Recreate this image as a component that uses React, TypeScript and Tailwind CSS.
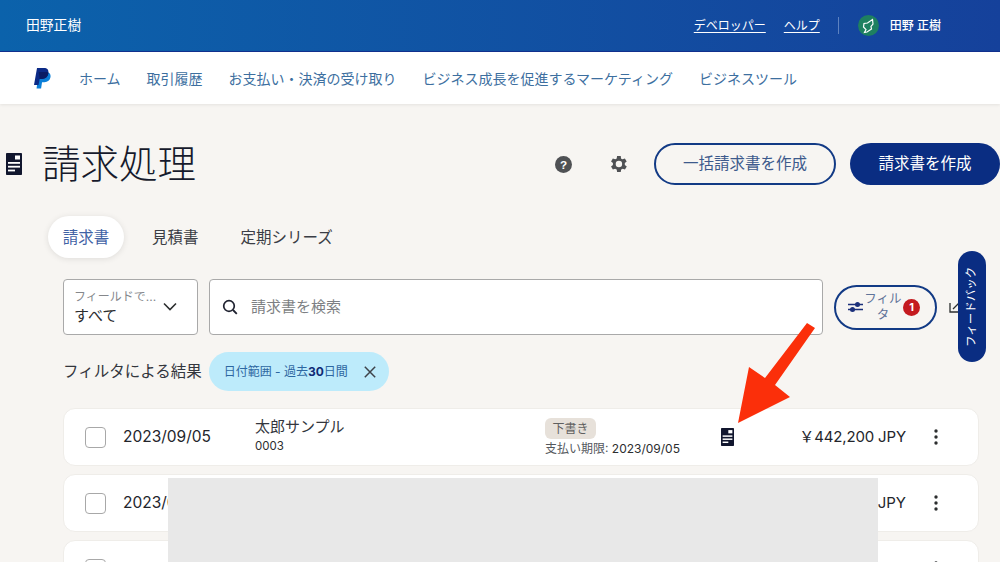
import React from "react";

const DocIcon = ({ className }: { className: string }) => (
  <svg viewBox="0 0 16 22" className={className}>
    <rect width="16" height="22" rx="0.800" fill="#11162e" />
    <rect x="9" y="2.500" width="5" height="4" fill="#fff" />
    <rect x="2" y="9" width="12" height="1.800" fill="#fff" />
    <rect x="2" y="12.800" width="12" height="1.800" fill="#fff" />
    <rect x="2" y="16.600" width="7" height="1.800" fill="#fff" />
  </svg>
);

const PayPal = () => (
  <svg viewBox="0 0 18 22" className="w-[17px] h-[21px]">
    <path d="M5 4H12C16 4 18 6 17.500 9.500C17 13 14.500 15 11 15H8.500L7.500 21.500H2.700Z" fill="#0b7fd8" />
    <path d="M3.200 0H10.500C14 0 15.800 2 15.200 5.500C14.600 9.500 12 11.500 8.500 11.500H6L4.800 18H0Z" fill="#0b2a86" />
    <path d="M5 4H12.500C14.500 4 15.500 4.500 15.300 5.500C14.600 9.500 12 11.500 8.500 11.500H6L5 4Z" fill="#0a1c64" />
  </svg>
);

const Kebab = () => (
  <svg viewBox="0 0 4 16" className="w-1 h-4">
    <circle cx="2" cy="2" r="1.700" fill="#2c2e2f" />
    <circle cx="2" cy="8" r="1.700" fill="#2c2e2f" />
    <circle cx="2" cy="14" r="1.700" fill="#2c2e2f" />
  </svg>
);

const Check = () => <span className="w-[21px] h-[21px] rounded-[4px] border border-[#a8a8a8] bg-white shrink-0" />;

export default function App() {
  return (
    <div className="relative w-[1000px] h-[562px] overflow-hidden bg-[#f7f5f2] text-[#1f2230] font-['Inter','Noto_Sans_CJK_JP',sans-serif]">
      <header className="h-[52px] border-b border-[#12318f] bg-gradient-to-r from-[#0b62ab] to-[#15419b] text-white flex items-center pl-[26px] pr-[59px]">
        <span className="text-[13.800px]">田野正樹</span>
        <a className="ml-auto text-[12px] underline underline-offset-2">デベロッパー</a>
        <a className="ml-[18px] text-[12px] underline underline-offset-2">ヘルプ</a>
        <span className="ml-[18px] w-px h-[17px] bg-[#5d82c0]" />
        <span className="ml-[19px] w-[21px] h-[21px] rounded-full bg-[#1e8060] flex items-center justify-center">
          <svg viewBox="0 0 14 16" className="w-[14px] h-[16px]">
            <path d="M11.500 1.500L12 6L10 8.500L10.500 11L6 14L3.500 14.500L5 11.500L2.500 9L3 5.500L6.500 5Z" fill="none" stroke="#fff" strokeWidth="1.200" />
          </svg>
        </span>
        <span className="ml-[11px] text-[12px] font-medium">田野 正樹</span>
      </header>

      <nav className="h-[52px] bg-white shadow-[0_1px_3px_rgba(0,0,0,0.08)] flex items-center pl-[34px] pt-[1px] text-[14px] text-[#3d6f9f]">
        <PayPal />
        <span className="ml-[28px]">ホーム</span>
        <span className="ml-[26px]">取引履歴</span>
        <span className="ml-[26px]">お支払い・決済の受け取り</span>
        <span className="ml-[26px]">ビジネス成長を促進するマーケティング</span>
        <span className="ml-[26px]">ビジネスツール</span>
      </nav>

      <section className="flex items-center h-[42px] mt-[39px] pl-[6px]">
        <DocIcon className="w-4 h-[22px]" />
        <h1 className="ml-[20px] text-[38.500px] font-light leading-none text-[#161a2c]">請求処理</h1>
        <svg viewBox="0 0 16 16" className="ml-auto w-[17px] h-[17px]">
          <circle cx="8" cy="8" r="8" fill="#4f5154" />
          <text x="8" y="12" textAnchor="middle" fontSize="11" fontWeight="700" fill="#fff" fontFamily="Liberation Sans">?</text>
        </svg>
        <svg viewBox="0 0 24 24" className="ml-[35px] w-[22px] h-[22px]">
          <path fill="#4f5154" fillRule="evenodd" d="M19.400 13a7.500 7.500 0 0 0 0-2l2.100-1.600-2-3.500-2.500 1a7.500 7.500 0 0 0-1.700-1L15 3.200h-4l-.4 2.700a7.500 7.500 0 0 0-1.700 1l-2.500-1-2 3.500L6.500 11a7.500 7.500 0 0 0 0 2l-2.100 1.600 2 3.500 2.500-1a7.500 7.500 0 0 0 1.700 1l.4 2.700h4l.4-2.700a7.500 7.500 0 0 0 1.700-1l2.500 1 2-3.500ZM13 15.500a3.500 3.500 0 1 1 0-7 3.500 3.500 0 0 1 0 7Z" />
        </svg>
        <button className="ml-[25px] w-[182px] h-[42px] rounded-full border-2 border-[#123a85] text-[15.500px] text-[#3d5a8c]">一括請求書を作成</button>
        <button className="ml-[14px] w-[150px] h-[42px] rounded-full bg-[#0a2d82] text-[15.500px] text-white">請求書を作成</button>
      </section>

      <div className="flex items-center h-[42px] mt-[31px] ml-[48px] text-[15.500px]">
        <span className="w-[76px] h-[42px] pt-[1px] rounded-full bg-white shadow-[0_1px_6px_rgba(0,0,0,0.1)] flex items-center justify-center text-[#3f62a5]">請求書</span>
        <span className="ml-[28px] pt-[2px] text-[#3a3d45]">見積書</span>
        <span className="ml-[42px] pt-[2px] text-[#3a3d45]">定期シリーズ</span>
      </div>

      <div className="flex items-center mt-[21px] ml-[63px] h-[56px]">
        <div className="w-[135px] h-[56px] rounded-[4px] border border-[#a9a9a9] bg-white flex items-center pl-[10px] pr-[20px]">
          <div className="flex-1 min-w-0">
            <div className="text-[12px] leading-[15px] text-[#85878b] whitespace-nowrap mt-[1px]">フィールドで...</div>
            <div className="text-[15px] leading-[22px] mt-[1px] text-[#2c2e2f]">すべて</div>
          </div>
          <svg viewBox="0 0 14 9" className="w-[14px] h-[9px] -mt-[2px]">
            <path d="M1 1.500L7 7.500L13 1.500" fill="none" stroke="#2c2e2f" strokeWidth="1.600" />
          </svg>
        </div>
        <div className="ml-[11px] w-[614px] h-[56px] rounded-[4px] border border-[#a9a9a9] bg-white flex items-center pl-[12px] text-[15px] text-[#7d7f83]">
          <svg viewBox="0 0 16 16" className="w-4 h-4">
            <circle cx="7" cy="7" r="5.300" fill="none" stroke="#1f2230" strokeWidth="1.700" />
            <path d="M11 11L14.800 14.800" stroke="#1f2230" strokeWidth="1.800" />
          </svg>
          <span className="ml-[13px]">請求書を検索</span>
        </div>
        <div className="ml-[11px] w-[103px] h-[45px] rounded-full border-2 border-[#123a85] flex items-center pl-[12px]">
          <svg viewBox="0 0 15 12" className="w-[15px] h-[12px]">
            <path d="M0 3.500H15M0 8.500H15" stroke="#1b2f7a" strokeWidth="1.300" />
            <circle cx="9.500" cy="3.500" r="2.500" fill="#1b2f7a" />
            <circle cx="4.500" cy="8.500" r="2.500" fill="#1b2f7a" />
          </svg>
          <span className="ml-[1px] w-[38px] text-center text-[12.500px] leading-[16px] text-[#5f7399]">フィルタ</span>
          <span className="ml-[1px] w-[17px] h-[17px] rounded-full bg-[#c41a1f] text-white text-[11px] font-bold flex items-center justify-center">1</span>
        </div>
        <svg viewBox="0 0 12 12" className="ml-[12px] w-[12px] h-[12px]">
          <path d="M1 2V11H11V8M4 8L10 2" fill="none" stroke="#2c2e2f" strokeWidth="1.300" />
        </svg>
      </div>

      <div className="flex items-center mt-[17px] ml-[63px] h-[39px]">
        <span className="text-[15.500px] text-[#33363d]">フィルタによる結果</span>
        <span className="ml-[7px] w-[180px] h-[39px] rounded-full bg-[#bdebfb] flex items-center pl-[15px] text-[12px] text-[#2d67a1] whitespace-nowrap">
          日付範囲 - 過去<b className="text-[#0f2a75]">30</b>日間
          <svg viewBox="0 0 12 12" className="ml-[16px] w-3 h-3 shrink-0">
            <path d="M.8.800L11.200 11.200M11.200.800L.8 11.200" stroke="#3e4249" strokeWidth="1.500" />
          </svg>
        </span>
      </div>

      <div className="mt-[17px] mr-[21px] ml-[63px] flex flex-col gap-2">
        <div className="h-[58px] rounded-xl border border-[#efede9] bg-white flex items-center pl-[21px] pr-[40px]">
          <Check />
          <span className="ml-[17px] w-[132px] text-[15.500px] text-[#23252b]">2023/09/05</span>
          <div className="w-[290px] -mt-[2px]">
            <div className="text-[15px] leading-[20px] text-[#33363d]">太郎サンプル</div>
            <div className="text-[11.500px] leading-[18px] text-[#2c2e2f]">0003</div>
          </div>
          <div className="w-[176px]">
            <span className="block w-[51px] h-[21px] rounded-[6px] bg-[#e7e1da] text-center text-[12px] leading-[21px] text-[#5f5f5f]">下書き</span>
            <div className="text-[12px] leading-[17px] mt-[1px] text-[#55585d] whitespace-nowrap">支払い期限: <span className="text-[#2c2e2f]">2023/09/05</span></div>
          </div>
          <DocIcon className="w-[13px] h-[18px]" />
          <span className="ml-auto text-[15px] tracking-[-0.15px] text-[#23252b]">￥442,200 JPY</span>
          <span className="ml-[28px]"><Kebab /></span>
        </div>
        <div className="h-[58px] rounded-xl border border-[#efede9] bg-white flex items-center pl-[21px] pr-[40px]">
          <Check />
          <span className="ml-[17px] text-[15.500px] text-[#23252b]">2023/09/05</span>
          <span className="ml-auto text-[15px] text-[#23252b]">JPY</span>
          <span className="ml-[28px]"><Kebab /></span>
        </div>
        <div className="h-[58px] rounded-xl border border-[#efede9] bg-white flex items-center pl-[21px] pr-[40px]">
          <Check />
          <span className="ml-auto"><Kebab /></span>
        </div>
      </div>

      <div className="absolute left-[168px] top-[478px] w-[710px] h-[84px] bg-[#e8e8e8]" />

      <div className="absolute left-[958px] top-[251px] w-[28px] h-[111px] rounded-full bg-[#0a2d82] flex items-center justify-center text-white text-[11.500px] [writing-mode:vertical-rl] [text-orientation:sideways] rotate-180 whitespace-nowrap">フィードバック</div>

      <svg viewBox="0 0 80 105" className="absolute left-[736px] top-[320px] w-[80px] h-[105px]">
        <path d="M2 103L13 47L29 58L71 3L79 8L39 65L54 77Z" fill="#fb2f0a" />
      </svg>
    </div>
  );
}
